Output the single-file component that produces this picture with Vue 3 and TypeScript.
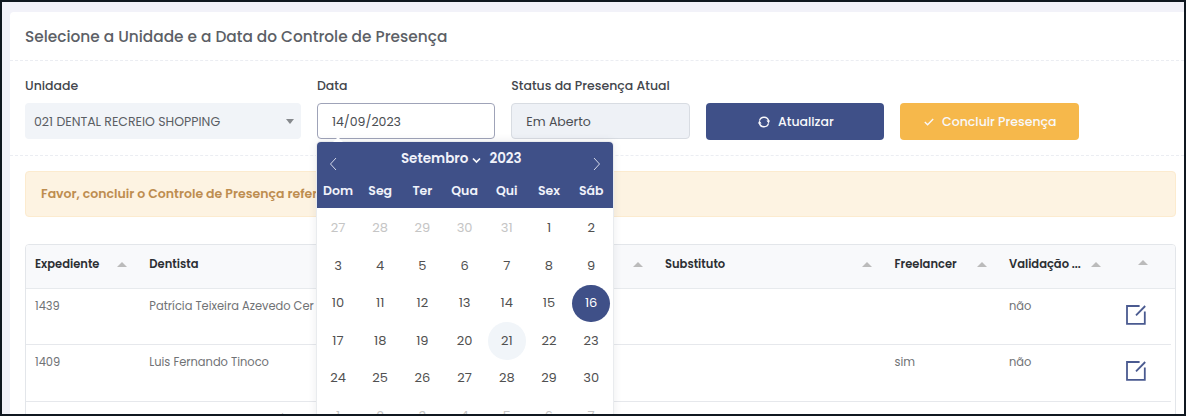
<script setup lang="ts">
interface Row {
  id: string
  dentista: string
  freelancer: string
  validacao: string
}

interface Day {
  n: number
  state: '' | 'muted' | 'selected' | 'today'
}

const weekdays: string[] = ['Dom', 'Seg', 'Ter', 'Qua', 'Qui', 'Sex', 'Sáb']

const days: Day[] = Array.from({ length: 42 }, (_, i): Day => {
  if (i < 5) return { n: 27 + i, state: 'muted' }
  if (i > 34) return { n: i - 34, state: 'muted' }
  const n = i - 4
  return { n, state: n === 16 ? 'selected' : n === 21 ? 'today' : '' }
})

const rows: Row[] = [
  { id: '1439', dentista: 'Patrícia Teixeira Azevedo Cer', freelancer: '', validacao: 'não' },
  { id: '1409', dentista: 'Luis Fernando Tinoco', freelancer: 'sim', validacao: 'não' },
]
</script>

<template>
  <div class="screen">
    <main class="card">
      <header class="title"><span>Selecione a Unidade e a Data do Controle de Presença</span></header>

      <section class="filters">
        <div class="field">
          <label>Unidade</label>
          <div class="box select">
            <span>021 DENTAL RECREIO SHOPPING</span>
            <i class="caret"></i>
          </div>
        </div>

        <div class="field">
          <label>Data</label>
          <div class="box input"><span>14/09/2023</span></div>
          <div class="calendar">
            <div class="cal-head">
              <div class="cal-month">
                <svg class="prev" width="8" height="14" viewBox="0 0 8 14"><path d="M7 1 1.5 7 7 13" /></svg>
                <span class="month">Setembro</span>
                <svg class="down" width="9" height="7" viewBox="0 0 9 7"><path d="M1 1.5 4.5 5 8 1.5" /></svg>
                <span>2023</span>
                <svg class="next" width="8" height="14" viewBox="0 0 8 14"><path d="M1 1 6.5 7 1 13" /></svg>
              </div>
              <div class="cal-week">
                <span v-for="w in weekdays" :key="w">{{ w }}</span>
              </div>
            </div>
            <div class="cal-days">
              <span v-for="(d, i) in days" :key="i" :class="['day', d.state]">{{ d.n }}</span>
            </div>
          </div>
        </div>

        <div class="field">
          <label>Status da Presença Atual</label>
          <div class="box status"><span>Em Aberto</span></div>
        </div>

        <button class="btn blue">
          <svg width="12" height="12" viewBox="0 0 12 12">
            <path d="M1.5 4.6A4.7 4.7 0 0 1 10.6 5M10.5 7.4A4.7 4.7 0 0 1 1.4 7" />
            <path class="fill" d="M8.4 4.6H12L10.7 7.6zM3.6 7.4H0L1.3 4.4z" />
          </svg>
          <span>Atualizar</span>
        </button>
        <button class="btn amber">
          <svg width="10" height="8" viewBox="0 0 10 8"><path d="M.8 4 3.6 6.7 9.2 1.1" /></svg>
          <span>Concluir Presença</span>
        </button>
      </section>

      <div class="alert"><span>Favor, concluir o Controle de Presença refer</span></div>

      <section class="table">
        <div class="tr thead">
          <div class="th"><span>Expediente</span><i class="sort"></i></div>
          <div class="th"><span>Dentista</span><i class="sort"></i></div>
          <div class="th"><span>Substituto</span><i class="sort"></i></div>
          <div class="th"><span>Freelancer</span><i class="sort"></i></div>
          <div class="th"><span>Validação ...</span><i class="sort"></i></div>
          <div class="th last"><i class="sort"></i></div>
        </div>
        <div v-for="r in rows" :key="r.id" class="tr row">
          <div class="td">{{ r.id }}</div>
          <div class="td">{{ r.dentista }}</div>
          <div class="td"></div>
          <div class="td">{{ r.freelancer }}</div>
          <div class="td">{{ r.validacao }}</div>
          <div class="td edit">
            <svg width="20" height="20" viewBox="0 0 20 20">
              <path d="M13.6 1H1v17.8h17.8V6.4" />
              <path d="M10 10.4 19.2 1" />
            </svg>
          </div>
        </div>
        <div class="tr row">
          <div class="td"></div>
          <div class="td accent">´</div>
        </div>
      </section>
    </main>
  </div>
</template>

<style>
body {
  margin: 0;
  overflow: hidden;
}
</style>

<style scoped>
* {
  box-sizing: border-box;
}
.screen {
  width: 1186px;
  height: 416px;
  overflow: hidden;
  border: 2px solid #101820;
  background: #f2f2f9;
  padding: 10px 0 0 8px;
  font-family: Poppins, Inter, 'Liberation Sans', sans-serif;
  font-size: 12.5px;
  color: #333;
}
.card {
  height: 420px;
  background: #fff;
  border-radius: 4px 0 0 0;
}
.card span,
.card label {
  white-space: nowrap;
}
.title {
  height: 49px;
  padding: 0 0 0 15px;
  display: flex;
  align-items: center;
  border-bottom: 1px dashed #ebedf2;
  font-size: 15.36px;
  font-weight: 500;
  color: #5c5f66;
}
.filters {
  height: 95px;
  padding: 17px 0 0 15px;
  display: grid;
  grid-template-columns: 276px repeat(4, 178.5px);
  gap: 15.9px;
  align-items: start;
  border-bottom: 1px dashed #ebedf2;
}
.field {
  position: relative;
}
.field label {
  display: block;
  height: 16px;
  line-height: 16px;
  margin-bottom: 9px;
  font-weight: 500;
  color: #43464c;
}
.box {
  height: 36px;
  border-radius: 4px;
  padding: 1px 14px 0;
  display: flex;
  align-items: center;
  border: 1px solid transparent;
  color: #4a4d52;
}
.select {
  background: #f1f4f8;
  padding: 1px 6px 0 8px;
  justify-content: space-between;
  color: #5a5e64;
}
.caret {
  border: 4px solid transparent;
  border-top: 5px solid #86898d;
  border-bottom: 0;
}
.input {
  border-color: #9fa3b8;
}
.status {
  background: #eef1f6;
  border-color: #d8dce2;
}
.btn {
  margin-top: 25px;
  height: 37px;
  border: 0;
  border-radius: 4px;
  padding: 0 0 0 2px;
  display: flex;
  align-items: center;
  justify-content: center;
  font: 500 12.5px Poppins, Inter, 'Liberation Sans', sans-serif;
  color: #f8f8fb;
  gap: 8px;
}
.blue {
  background: #3f5088;
}
.amber {
  background: #f6b84b;
}
svg path {
  fill: none;
  stroke: #f8f8fb;
  stroke-width: 1.4;
}
svg path.fill {
  fill: #f8f8fb;
  stroke: none;
}
.calendar {
  position: absolute;
  z-index: 5;
  left: 0;
  top: 64px;
  width: 296px;
  height: 300px;
  background: #fff;
  border-radius: 4px;
  box-shadow: 0 0 0 1px #e9ebee, 0 0 10px rgba(60, 65, 80, 0.12);
}
.calendar::before {
  content: '';
  position: absolute;
  left: 16px;
  top: -5px;
  border: 5px solid transparent;
  border-top: 0;
  border-bottom-color: #fff;
}
.cal-head {
  position: relative;
  height: 66px;
  background: #3f5088;
  border-radius: 4px 4px 0 0;
  color: #f0f2fa;
}
.cal-month {
  height: 34px;
  display: flex;
  align-items: center;
  padding: 0 12px;
  font-size: 13.5px;
  font-weight: 600;
}
.month {
  margin-left: 64px;
}
.down {
  margin: 2px 8px 0 4px;
}
.down path {
  stroke-width: 1.7;
}
.next {
  margin-left: auto;
}
.prev,
.next {
  margin-top: 10px;
}
.prev path,
.next path {
  stroke-width: 1;
  stroke: #d5d9ea;
}
.cal-week {
  height: 30px;
  width: 295.4px;
  display: grid;
  grid-template-columns: repeat(7, 1fr);
  align-items: center;
  text-align: center;
  font-size: 12.5px;
  font-weight: 600;
}
.cal-days {
  width: 295.4px;
  padding-top: 1.5px;
  display: grid;
  grid-template-columns: repeat(7, 1fr);
  justify-items: center;
}
.day {
  width: 37.5px;
  height: 37.5px;
  border-radius: 50%;
  display: flex;
  align-items: center;
  justify-content: center;
  font-size: 13px;
  color: #505050;
}
.muted {
  color: #c5c5c5;
}
.selected {
  background: #3f5088;
  color: #fff;
}
.today {
  background: #f1f5f9;
}
.alert {
  margin: 15px 8px 27px 15px;
  height: 46px;
  border: 1px solid #fcebcf;
  border-radius: 4px;
  background: #fdf3e2;
  padding: 0 15px;
  display: flex;
  align-items: center;
  font-weight: 600;
  color: #bd8d50;
}
.table {
  margin: 0 8px 0 15px;
  height: 200px;
  border: 1px solid #e3e6ea;
  border-radius: 4px;
  overflow: hidden;
}
.tr {
  display: grid;
  grid-template-columns: 114.3px 515.7px 229.5px 114.5px 114.5px 56.5px;
  width: 1145px;
}
.thead {
  width: 100%;
  height: 44px;
  background: #f8f9fb;
  border-bottom: 1px solid #e7eaed;
}
.th {
  padding: 0 13px 4px 9px;
  display: flex;
  align-items: center;
  justify-content: space-between;
  font-size: 11.5px;
  font-weight: 600;
  color: #2c2f33;
}
.th.last {
  justify-content: center;
  padding: 0 0 8px;
}
.sort {
  border: 5.5px solid transparent;
  border-top: 0;
  border-bottom: 5px solid #bbb;
}
.row {
  height: 56.4px;
  border-bottom: 1px solid #e6e8ec;
}
.td {
  padding: 9px 0 0 9px;
  line-height: 16px;
  font-size: 11.45px;
  color: #707275;
}
.edit {
  padding: 16px 0 0 12px;
}
.edit path {
  stroke: #4a5a90;
  stroke-width: 1.8;
}
.accent {
  padding-left: 140px;
}
</style>
